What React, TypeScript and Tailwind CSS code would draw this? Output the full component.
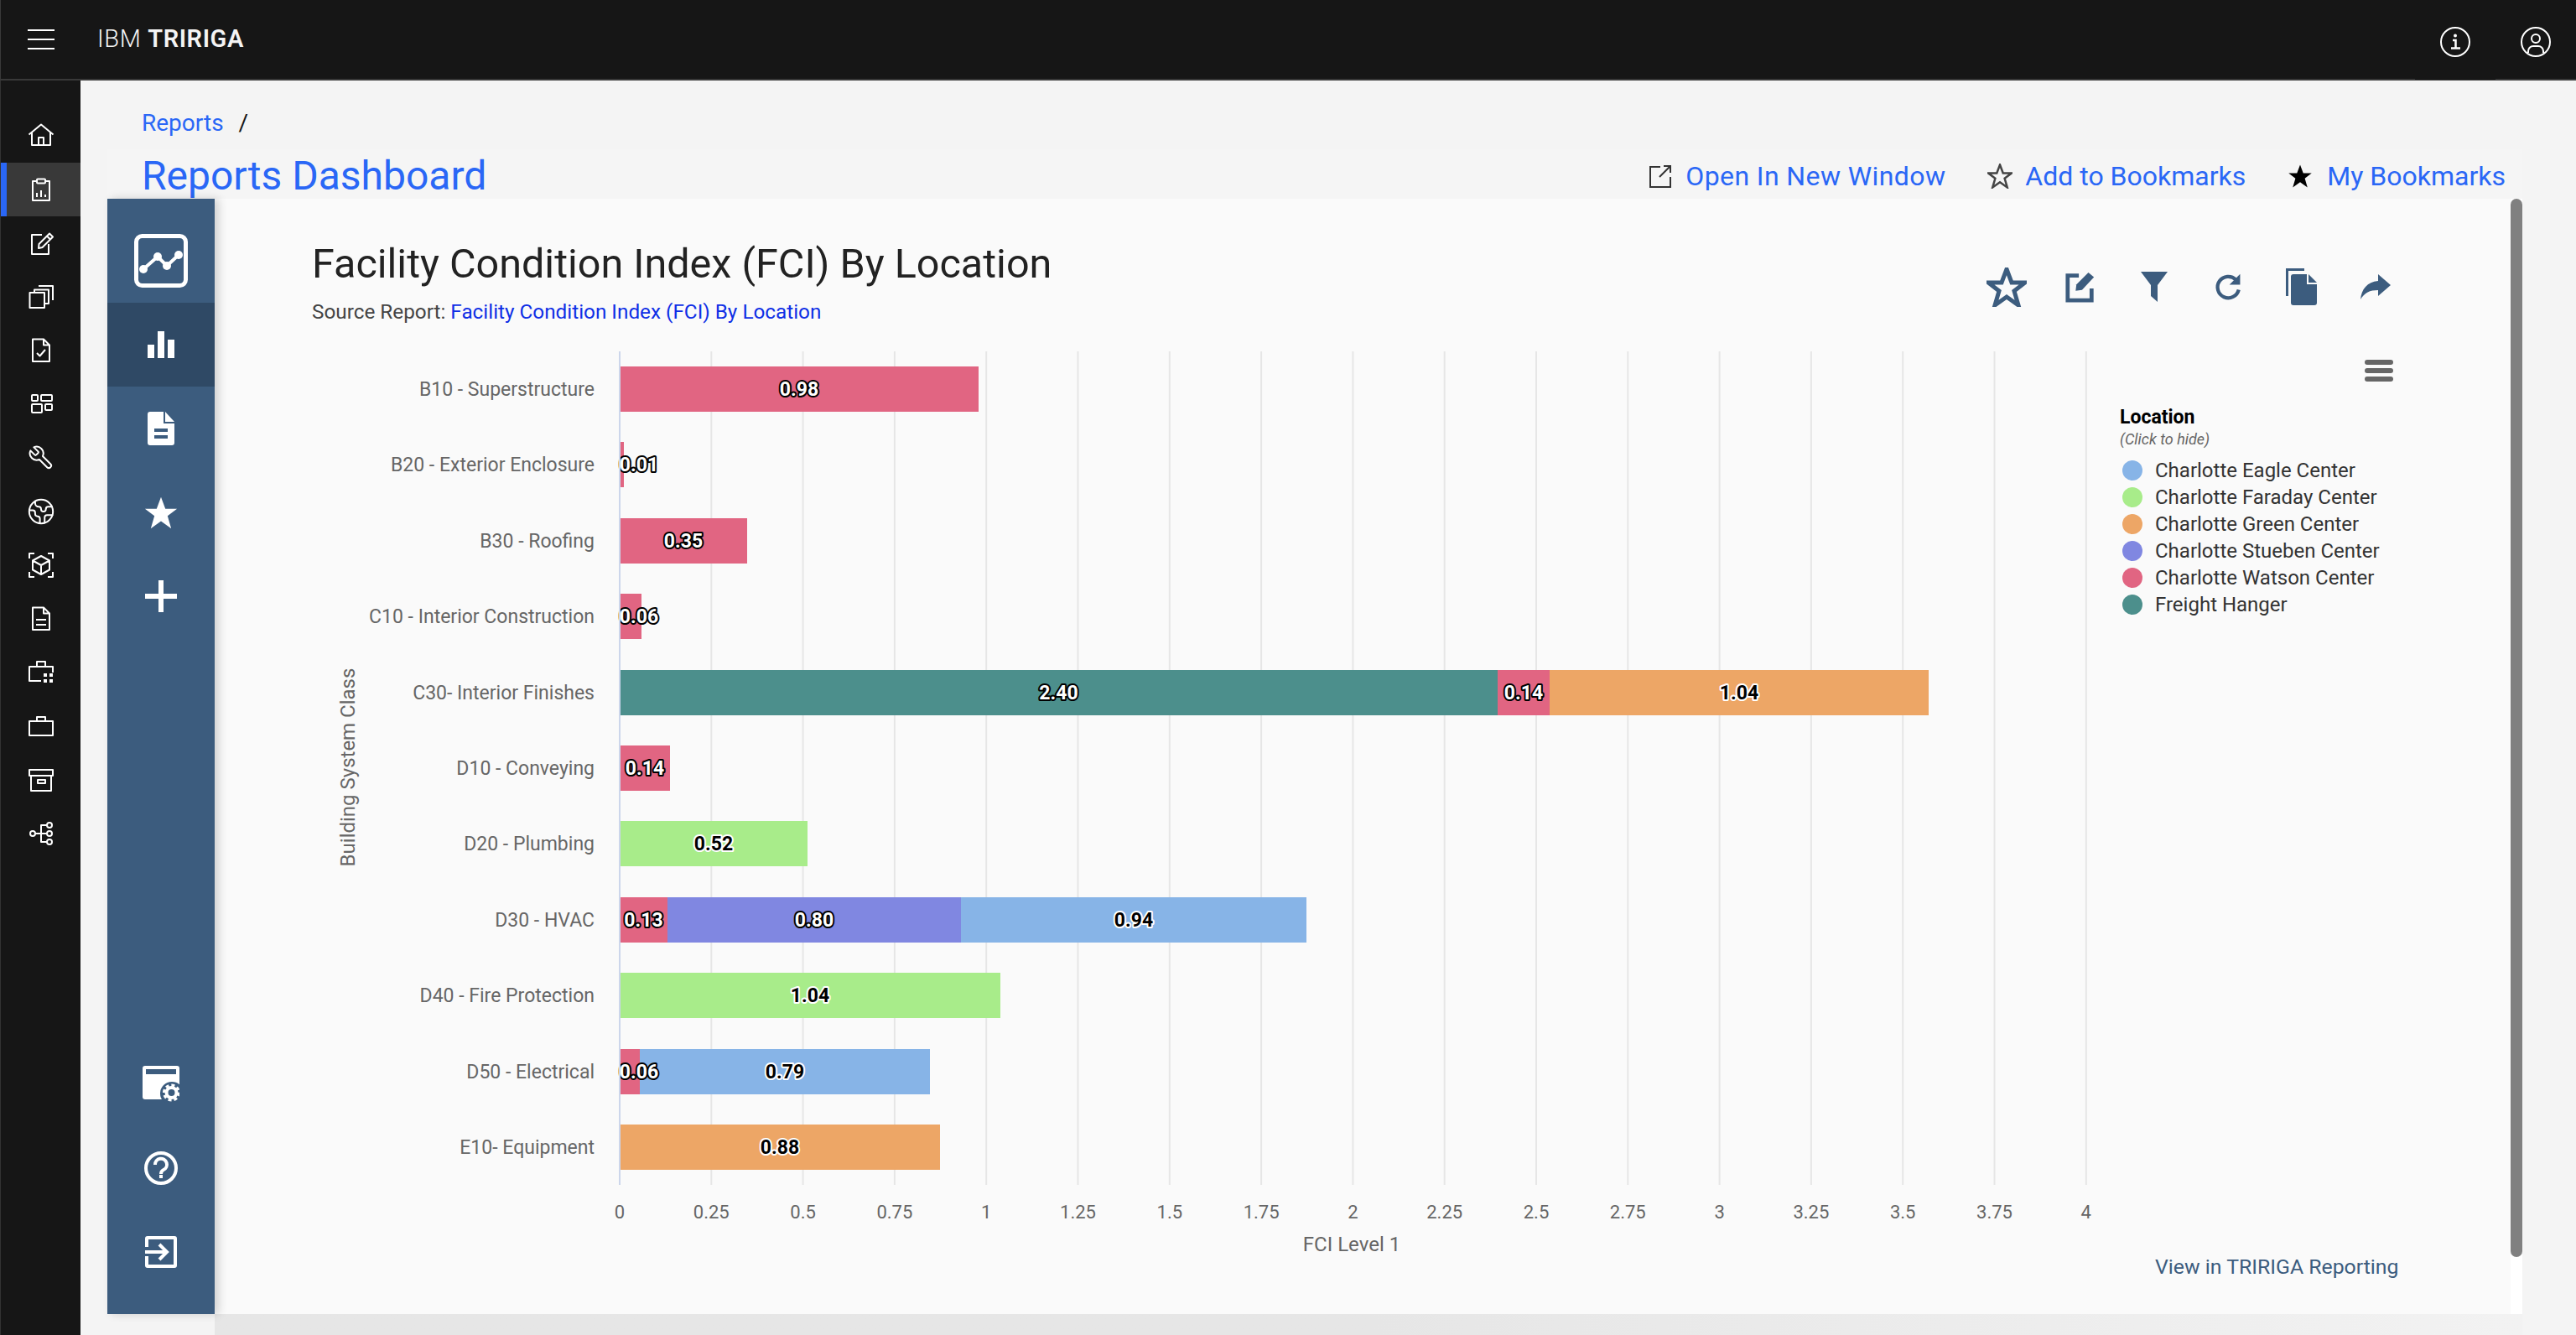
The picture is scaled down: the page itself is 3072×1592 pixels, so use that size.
import { Earth } from "lucide-react";
import type { ReactNode } from "react";

const PINK = "#e16582";
const TEAL = "#4c8f8c";
const ORANGE = "#eda666";
const GREEN = "#a8ec8a";
const BLUE = "#87b4e7";
const PURPLE = "#8087e1";

type Seg = { w: number; color: string; text: string; dark?: boolean; labelX?: number };

const rows: { label: string; segs: Seg[] }[] = [
  { label: "B10 - Superstructure", segs: [{ w: 428, color: PINK, text: "0.98" }] },
  { label: "B20 - Exterior Enclosure", segs: [{ w: 5, color: PINK, text: "0.01", labelX: 762 }] },
  { label: "B30 - Roofing", segs: [{ w: 152, color: PINK, text: "0.35" }] },
  { label: "C10 - Interior Construction", segs: [{ w: 26, color: PINK, text: "0.06", labelX: 762 }] },
  {
    label: "C30- Interior Finishes",
    segs: [
      { w: 1047, color: TEAL, text: "2.40" },
      { w: 62, color: PINK, text: "0.14" },
      { w: 452, color: ORANGE, text: "1.04", dark: true },
    ],
  },
  { label: "D10 - Conveying", segs: [{ w: 60, color: PINK, text: "0.14" }] },
  { label: "D20 - Plumbing", segs: [{ w: 224, color: GREEN, text: "0.52", dark: true }] },
  {
    label: "D30 - HVAC",
    segs: [
      { w: 57, color: PINK, text: "0.13" },
      { w: 350, color: PURPLE, text: "0.80" },
      { w: 412, color: BLUE, text: "0.94", dark: true },
    ],
  },
  { label: "D40 - Fire Protection", segs: [{ w: 454, color: GREEN, text: "1.04", dark: true }] },
  {
    label: "D50 - Electrical",
    segs: [
      { w: 24, color: PINK, text: "0.06", labelX: 762 },
      { w: 346, color: BLUE, text: "0.79", dark: true },
    ],
  },
  { label: "E10- Equipment", segs: [{ w: 382, color: ORANGE, text: "0.88", dark: true }] },
];

const ticks = ["0", "0.25", "0.5", "0.75", "1", "1.25", "1.5", "1.75", "2", "2.25", "2.5", "2.75", "3", "3.25", "3.5", "3.75", "4"];

const legend = [
  { name: "Charlotte Eagle Center", color: BLUE },
  { name: "Charlotte Faraday Center", color: GREEN },
  { name: "Charlotte Green Center", color: ORANGE },
  { name: "Charlotte Stueben Center", color: PURPLE },
  { name: "Charlotte Watson Center", color: PINK },
  { name: "Freight Hanger", color: TEAL },
];

const Line = ({ children }: { children: ReactNode }) => (
  <svg width="32" height="32" viewBox="0 0 32 32" fill="none" stroke="#fff" strokeWidth="2" strokeLinejoin="round">
    {children}
  </svg>
);

const navIcons: ReactNode[] = [
  <Line>
    <path d="M1.5 14.5 16 2.5l14.5 12M5 11.5V27h22V11.5M13 27v-9h6v9" />
  </Line>,
  <Line>
    <path d="M11 6H6v23h20V6h-5" />
    <rect x="11" y="3.5" width="10" height="5" rx="1" />
    <path d="M11 25v-5M16 25v-8M21 25v-3" />
  </Line>,
  <Line>
    <path d="M17 6H5v23h20V17" />
    <path d="M13 22l.5-5L26 4.5l4 4L17.5 21ZM23 7.5l4 4" />
  </Line>,
  <Line>
    <rect x="2.5" y="11" width="17.5" height="18" />
    <path d="M8 11V7.5h17V24h-5M13 3h17v17" />
  </Line>,
  <Line>
    <path d="M6 2.5h13l7 7V29H6ZM19 2.5v7h7M11 19l3.5 3.5L21 15" />
  </Line>,
  <Line>
    <rect x="5" y="5" width="7" height="7" rx="1" />
    <rect x="16" y="5" width="13" height="7" rx="1" />
    <rect x="5" y="16" width="12" height="10" rx="1" />
    <rect x="21" y="16" width="8" height="7" rx="1" />
  </Line>,
  <svg width="32" height="32" viewBox="0 0 24 24" fill="none" stroke="#fff" strokeWidth="1.5" strokeLinejoin="round">
    <path transform="translate(24 0) scale(-1 1)" d="M14.7 6.3a1 1 0 0 0 0 1.4l1.6 1.6a1 1 0 0 0 1.4 0l3.77-3.77a6 6 0 0 1-7.94 7.94l-6.91 6.91a2.12 2.12 0 0 1-3-3l6.91-6.91a6 6 0 0 1 7.94-7.94l-3.76 3.76z" />
  </svg>,
  <Earth size={34} color="#fff" strokeWidth={1.4} />,
  <Line>
    <path d="M2 8V2h6M24 2h6v6M30 24v6h-6M8 30H2v-6" />
    <path d="M16 5l10 5.5v11L16 27 6 21.5v-11ZM6 10.5 16 16l10-5.5M16 16v11" />
  </Line>,
  <Line>
    <path d="M6 2.5h13l7 7V29H6ZM19 2.5v7h7M10 17h12M10 23h12" />
  </Line>,
  <Line>
    <path d="M16 26H2V9h28v7M11 9V3h10v6" />
    <path d="M19 17h4v4h-4ZM26 17h4v4h-4ZM19 24h4v4h-4ZM26 24h4v4h-4Z" fill="#fff" stroke="none" />
  </Line>,
  <Line>
    <path d="M2 10h28v17H2ZM11 10V5h10v5" />
  </Line>,
  <Line>
    <path d="M2 4h28v7H2ZM4 11v18h24V11M12 16h9v4h-9Z" />
  </Line>,
  <Line>
    <circle cx="6" cy="16" r="3" />
    <circle cx="26" cy="6" r="3" />
    <circle cx="26" cy="16" r="3" />
    <circle cx="26" cy="26" r="3" />
    <path d="M9 16h14M23 6h-7v20h7" />
  </Line>,
];

const starPoints = "24,2 30,18 46,18 33,28 38,45 24,35 10,45 15,28 2,18 18,18";

function DataLabel({ x, y, seg }: { x: number; y: number; seg: Seg }) {
  return (
    <text
      x={x}
      y={y}
      textAnchor="middle"
      dominantBaseline="central"
      fontSize="23"
      fontWeight="700"
      fill={seg.dark ? "#000" : "#fff"}
      stroke={seg.dark ? "#fff" : "#000"}
      strokeWidth="4"
      strokeLinejoin="round"
      paintOrder="stroke"
    >
      {seg.text}
    </text>
  );
}

function Chart() {
  return (
    <svg width="2120" height="1090" viewBox="390 410 2120 1090" className="shrink-0">
      {ticks.map((t, i) => (
        <g key={t}>
          {i > 0 && <line x1={739 + i * 109.3} x2={739 + i * 109.3} y1="419" y2="1413" stroke="#e6e6e6" strokeWidth="2" />}
          <text x={739 + i * 109.3} y="1445" textAnchor="middle" dominantBaseline="central" fontSize="22" fill="#666">
            {t}
          </text>
        </g>
      ))}
      {rows.map((row, i) => {
        const top = Math.round(437 + i * 90.4);
        const mid = top + 27;
        let x = 739;
        const bars = row.segs.map((seg) => {
          const left = x;
          x += seg.w;
          return { seg, left };
        });
        return (
          <g key={row.label}>
            <text x="709" y={mid} textAnchor="end" dominantBaseline="central" fontSize="23" fill="#666">
              {row.label}
            </text>
            {bars.map(({ seg, left }) => (
              <rect key={left} x={left} y={top} width={seg.w} height="54" fill={seg.color} />
            ))}
            {bars.map(({ seg, left }) => (
              <DataLabel key={left} x={seg.labelX ?? left + seg.w / 2} y={mid} seg={seg} />
            ))}
          </g>
        );
      })}
      <line x1="739" x2="739" y1="419" y2="1413" stroke="#ccd6eb" strokeWidth="2" />
      <text x="1612" y="1484" textAnchor="middle" dominantBaseline="central" fontSize="24" fill="#666">
        FCI Level 1
      </text>
      <text transform="translate(415 915) rotate(-90)" textAnchor="middle" dominantBaseline="central" fontSize="24" fill="#666">
        Building System Class
      </text>
    </svg>
  );
}

function ToolbarIcons() {
  return (
    <div className="flex items-start pt-[61px] pr-[117px] [&>div]:flex [&>div]:h-[88px] [&>div]:w-[88px] [&>div]:items-center [&>div]:justify-center">
      <div>
        <svg width="48" height="47" viewBox="0 0 48 47" fill="none" stroke="#3c5c7e" strokeWidth="5">
          <polygon points={starPoints} />
        </svg>
      </div>
      <div>
        <svg width="38" height="38" viewBox="0 0 40 40" fill="none" stroke="#3c5c7e" strokeWidth="5">
          <path d="M18 6H4v31h30V22" />
          <path d="M14 25l1-8L30 2l7 6-15 16Z" fill="#3c5c7e" stroke="none" />
        </svg>
      </div>
      <div>
        <svg width="32" height="36" viewBox="0 0 32 36" fill="#3c5c7e">
          <path d="M0 0h32L20 16v20l-8-7V16Z" />
        </svg>
      </div>
      <div>
        <svg width="34" height="34" viewBox="0 0 40 40" fill="none" stroke="#3c5c7e" strokeWidth="5">
          <path d="M31 10A15 15 0 1 0 35 24" />
          <path d="M37 2v15H22Z" fill="#3c5c7e" stroke="none" />
        </svg>
      </div>
      <div>
        <svg width="40" height="46" viewBox="0 0 40 46" fill="#3c5c7e">
          <path d="M1 34V1h22v3H4v30Z" />
          <path d="M10 8h16v12h12v22a3 3 0 0 1-3 3H10a3 3 0 0 1-3-3V11a3 3 0 0 1 3-3Z" />
          <path d="M28 8l10 10H28Z" />
        </svg>
      </div>
      <div>
        <svg width="38" height="30" viewBox="0 0 38 30" fill="#3c5c7e">
          <path d="M22 0l15 13-15 13v-7C12 19 6 22 1 30c1-12 8-21 21-22Z" />
        </svg>
      </div>
    </div>
  );
}

export default function App() {
  return (
    <div className="flex h-[1592px] w-full flex-col overflow-hidden bg-[#f4f4f4] font-['Roboto',sans-serif]">
      {/* Top bar */}
      <header className="flex h-[96px] shrink-0 items-center border-b-2 border-l border-[#393939] bg-[#161616]">
        <div className="flex w-[95px] justify-center">
          <div className="flex w-[32px] flex-col gap-[9px]">
            <div className="h-[2px] bg-white" />
            <div className="h-[2px] bg-white" />
            <div className="h-[2px] bg-white" />
          </div>
        </div>
        <div className="ml-[20px] text-[29px] tracking-[0.6px] text-[#f4f4f4]">
          <span className="font-light">IBM</span> <span className="font-semibold">TRIRIGA</span>
        </div>
        <div className="ml-auto flex h-[96px]">
          <div className="flex h-[96px] w-[96px] items-center justify-center bg-[#161616] pt-[6px]">
            <svg width="36" height="36" viewBox="0 0 36 36" fill="none" stroke="#fff" strokeWidth="2">
              <circle cx="18" cy="18" r="17" />
              <path d="M15 16h3.5v9M13 25.5h11" strokeWidth="2.5" />
              <circle cx="18" cy="10.5" r="2" fill="#fff" stroke="none" />
            </svg>
          </div>
          <div className="flex h-[94px] w-[96px] items-center justify-center pt-[8px]">
            <svg width="36" height="36" viewBox="0 0 36 36" fill="none" stroke="#fff" strokeWidth="2">
              <circle cx="18" cy="18" r="17" />
              <circle cx="18" cy="14" r="5" />
              <path d="M9 31v-2a6 6 0 0 1 6-6h6a6 6 0 0 1 6 6v2" />
            </svg>
          </div>
        </div>
      </header>

      <div className="flex min-h-0 flex-1">
        {/* Left nav */}
        <nav className="flex w-[96px] shrink-0 flex-col border-l border-[#333] bg-[#161616] pt-[34px]">
          {navIcons.map((icon, i) => (
            <div
              key={i}
              className={
                i === 1
                  ? "flex h-[64px] items-center justify-center border-l-[7px] border-[#2a67f6] bg-[#393939] pr-[7px]"
                  : "flex h-[64px] items-center justify-center"
              }
            >
              {icon}
            </div>
          ))}
        </nav>

        <main className="flex min-w-0 flex-1 flex-col">
          <div className="flex h-[82px] shrink-0 items-start gap-[18px] pt-[33px] pl-[73px] text-[28px] leading-[36px]">
            <span className="text-[#2a67f6]">Reports</span>
            <span className="text-[#161616]">/</span>
          </div>

          <div className="ml-[32px] mr-[64px] flex h-[59px] shrink-0 items-center justify-between bg-[#f5f5f5] pt-[5px] pl-[41px] pr-[20px]">
            <h1 className="text-[48px] text-[#2a67f6]">Reports Dashboard</h1>
            <div className="flex items-center text-[32px] text-[#2a67f6]">
              <svg width="28" height="28" viewBox="0 0 28 28" fill="none" stroke="#333" strokeWidth="2" className="mr-[16px]">
                <path d="M14 3H2v24h24V15M18 2h8v8M26 2 13 15" />
              </svg>
              <span className="tracking-[0.4px]">Open In New Window</span>
              <svg width="30" height="30" viewBox="0 0 48 47" fill="none" stroke="#444" strokeWidth="4" className="ml-[50px] mr-[15px]">
                <polygon points={starPoints} />
              </svg>
              <span>Add to Bookmarks</span>
              <svg width="30" height="30" viewBox="0 0 48 47" fill="#000" className="ml-[50px] mr-[17px]">
                <polygon points={starPoints} />
              </svg>
              <span>My Bookmarks</span>
            </div>
          </div>

          <div className="ml-[32px] mr-[64px] flex min-h-0 flex-1">
            {/* Report side panel */}
            <aside className="relative z-10 flex w-[128px] shrink-0 flex-col items-center bg-[#3c5c7e] shadow-[5px_0_10px_rgba(0,0,0,0.16)]">
              <div className="flex h-[124px] w-full items-center justify-center pt-[24px]">
                <svg width="64" height="64" viewBox="0 0 64 64" fill="none" stroke="#fff">
                  <rect x="2.5" y="2.5" width="59" height="59" rx="7" strokeWidth="5" />
                  <path d="M11 42 28 27l11 11 14-13" strokeWidth="4" />
                  <g fill="#fff" stroke="none">
                    <circle cx="11" cy="42" r="5" />
                    <circle cx="28" cy="27" r="5" />
                    <circle cx="39" cy="38" r="5" />
                    <circle cx="53" cy="25" r="5" />
                  </g>
                </svg>
              </div>
              <div className="flex h-[100px] w-full items-center justify-center bg-[#2f4965]">
                <svg width="32" height="32" viewBox="0 0 32 32" fill="#fff">
                  <rect x="0" y="16" width="8" height="16" />
                  <rect x="12" y="0" width="8" height="32" />
                  <rect x="24" y="10" width="8" height="22" />
                </svg>
              </div>
              <div className="flex h-[100px] w-full items-center justify-center">
                <svg width="32" height="40" viewBox="0 0 32 40" fill="#fff">
                  <path fillRule="evenodd" d="M3 0h16v14h13v23a3 3 0 0 1-3 3H3a3 3 0 0 1-3-3V3a3 3 0 0 1 3-3ZM8 20v4h16v-4ZM8 28v4h16v-4Z" />
                  <path d="M21 0l11 12H21Z" />
                </svg>
              </div>
              <div className="flex h-[100px] w-full items-center justify-center">
                <svg width="42" height="40" viewBox="0 0 48 46" fill="#fff">
                  <polygon points={starPoints} />
                </svg>
              </div>
              <div className="flex h-[100px] w-full items-center justify-center">
                <svg width="38" height="38" viewBox="0 0 38 38" fill="#fff">
                  <path d="M16 0h6v16h16v6H22v16h-6V22H0v-6h16Z" />
                </svg>
              </div>
              <div className="mt-auto flex h-[100px] w-full items-center justify-center">
                <svg width="44" height="44" viewBox="0 0 44 44">
                  <rect x="0" y="0" width="44" height="40" rx="3" fill="#fff" />
                  <rect x="4" y="4" width="36" height="6" fill="#3c5c7e" />
                  <circle cx="35" cy="33" r="14" fill="#3c5c7e" />
                  <circle cx="34.5" cy="32" r="6" fill="none" stroke="#fff" strokeWidth="4" />
                  <circle cx="34.5" cy="32" r="9" fill="none" stroke="#fff" strokeWidth="3" strokeDasharray="4 3" />
                </svg>
              </div>
              <div className="flex h-[100px] w-full items-center justify-center">
                <svg width="40" height="40" viewBox="0 0 40 40" fill="none" stroke="#fff" strokeWidth="4">
                  <circle cx="20" cy="20" r="18" />
                  <path d="M13 16a7 7 0 1 1 10 6c-2 1-3 2-3 5" />
                  <rect x="18" y="28" width="4" height="4" fill="#fff" stroke="none" />
                </svg>
              </div>
              <div className="mb-[24px] flex h-[100px] w-full items-center justify-center">
                <svg width="38" height="38" viewBox="0 0 38 38" fill="none" stroke="#fff" strokeWidth="4">
                  <path d="M2 13V3a1 1 0 0 1 1-1h32a1 1 0 0 1 1 1v32a1 1 0 0 1-1 1H3a1 1 0 0 1-1-1V24" />
                  <path d="M0 19h25M17 10l9 9-9 9" />
                </svg>
              </div>
            </aside>

            {/* Report card */}
            <section className="relative flex min-w-0 flex-1 flex-col bg-white pr-[14px]">
              <div className="flex min-h-0 flex-1 flex-col bg-[#fafafa]">
                <div className="flex h-[173px] shrink-0 justify-between pl-[116px]">
                  <div>
                    <h2 className="pt-[54px] text-[48.5px] leading-[48px] text-[#222]">
                      Facility Condition Index (FCI) By Location
                    </h2>
                    <p className="mt-[19px] text-[24.3px] leading-[28px] text-[#444]">
                      Source Report: <span className="text-[#0f2fe6]">Facility Condition Index (FCI) By Location</span>
                    </p>
                  </div>
                  <ToolbarIcons />
                </div>
                <div className="flex min-h-0 flex-1 pl-[134px]">
                  <Chart />
                  <div className="flex min-w-0 flex-1 flex-col pl-[18px]">
                    <div className="flex flex-col items-end gap-[4px] pt-[19px] pr-[140px]">
                      <div className="h-[6px] w-[34px] rounded-full bg-[#666]" />
                      <div className="h-[6px] w-[34px] rounded-full bg-[#666]" />
                      <div className="h-[6px] w-[34px] rounded-full bg-[#666]" />
                    </div>
                    <div className="mt-[29px] text-[23px] leading-[28px] font-bold text-black">Location</div>
                    <div className="text-[18px] leading-[24px] text-[#666] italic">(Click to hide)</div>
                    <ul className="mt-[9px] flex flex-col">
                      {legend.map((l) => (
                        <li key={l.name} className="flex h-[32px] items-center text-[24px] text-[#333]">
                          <span className="ml-[3px] mr-[15px] h-[24px] w-[24px] rounded-full" style={{ backgroundColor: l.color }} />
                          {l.name}
                        </li>
                      ))}
                    </ul>
                    <a className="mt-auto mb-[41px] ml-[42px] text-[24.8px] leading-[30px] text-[#3c5c7e]">View in TRIRIGA Reporting</a>
                  </div>
                </div>
              </div>
              <div className="absolute top-0 right-0 h-[1262px] w-[14px] rounded-full bg-[#808080]" />
            </section>
          </div>

          <div className="ml-[160px] mr-[64px] h-[25px] shrink-0 bg-gradient-to-r from-[#e6e6e6] via-[#e6e6e6] to-[#f2f2f2]" />
        </main>
      </div>
    </div>
  );
}
